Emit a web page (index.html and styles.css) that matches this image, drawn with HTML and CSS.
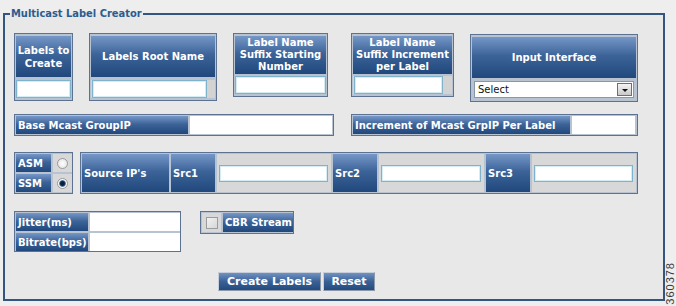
FILE: index.html
```html
<!DOCTYPE html>
<html lang="en">
<head>
  <meta charset="UTF-8" />
  <title>Multicast Label Creator</title>
  <link rel="stylesheet" href="styles.css">
</head>
<body>

  <!-- Multicast label creator form -->
  <fieldset class="creator">
    <legend>Multicast Label Creator</legend>

    <!-- Top row: label naming -->
    <div class="row row-top">
      <div class="box box-count">
        <div class="head">Labels to<br>Create</div>
        <input class="field" type="text">
      </div>
      <div class="box box-root">
        <div class="head">Labels Root Name</div>
        <div class="field-strip"><input class="field" type="text"></div>
      </div>
      <div class="box box-start">
        <div class="head three">Label Name<br>Suffix Starting<br>Number</div>
        <input class="field" type="text">
      </div>
      <div class="box box-inc">
        <div class="head three">Label Name<br>Suffix Increment<br>per Label</div>
        <div class="field-strip"><input class="field" type="text"></div>
      </div>
      <div class="box box-iface">
        <div class="head">Input Interface</div>
        <div class="select-wrap">
          <select class="select"><option>Select</option></select>
          <span class="select-arrow"></span>
        </div>
      </div>
    </div>

    <!-- Group IP row -->
    <div class="row row-ip">
      <div class="box inline ip-base">
        <div class="head left base-head">Base Mcast GroupIP</div>
        <input class="plain" type="text">
      </div>
      <div class="box inline ip-inc">
        <div class="head left inc-head">Increment of Mcast GrpIP Per Label</div>
        <input class="plain" type="text">
      </div>
    </div>

    <!-- Mode and sources -->
    <div class="row row-src">
      <div class="box grid mode">
        <div class="head left">ASM</div>
        <div class="cell"><input class="radio" type="radio" name="mode"></div>
        <div class="head left">SSM</div>
        <div class="cell"><input class="radio" type="radio" name="mode" checked></div>
      </div>
      <div class="box grid sources">
        <div class="head left">Source IP's</div>
        <div class="head left">Src1</div>
        <div class="cell pad"><input class="field" type="text"></div>
        <div class="head left">Src2</div>
        <div class="cell pad"><input class="field" type="text"></div>
        <div class="head left">Src3</div>
        <div class="cell pad"><input class="field" type="text"></div>
      </div>
    </div>

    <!-- Stream parameters -->
    <div class="row row-rate">
      <div class="box grid rate">
        <div class="head left">Jitter(ms)</div>
        <input class="plain" type="text">
        <div class="head left">Bitrate(bps)</div>
        <input class="plain" type="text">
      </div>
      <div class="box grid cbr">
        <div class="cell"><input class="check" type="checkbox"></div>
        <div class="head left">CBR Stream</div>
      </div>
    </div>

    <div class="actions">
      <button class="btn btn-create">Create Labels</button>
      <button class="btn btn-reset">Reset</button>
    </div>
  </fieldset>

  <span class="stamp">360378</span>

</body>
</html>
```

FILE: styles.css
```css
/* Page basics */
* {
  box-sizing: border-box;
}

body {
  margin: 0;
  width: 676px;
  height: 306px;
  position: relative;
  overflow: hidden;
  background-color: #eeeeee;
  font-family: "DejaVu Sans", Verdana, sans-serif;
  font-size: 10px;
}

/* Outer fieldset */
.creator {
  margin: 7px 0 0 3px;
  width: 662px;
  padding: 12px 9px 8px;
  border: 2px solid #34557f;
  background-color: #e8e8e8;
  min-width: 0;
}

.creator legend {
  margin-left: -4px;
  padding: 0 1px;
  color: #2d5c8e;
  font: bold 11px/14px "DejaVu Sans Condensed", "DejaVu Sans", sans-serif;
}

.row {
  display: flex;
  align-items: flex-start;
}

/* Blue framed boxes */
.box {
  display: flex;
  flex-direction: column;
  gap: 3px;
  padding: 2px 1px;
  border: 1px solid #5c7290;
  background-color: #b8c3d1;
}

.head {
  display: flex;
  align-items: center;
  justify-content: center;
  text-align: center;
  color: #ffffff;
  font-weight: bold;
  line-height: 13px;
  background: linear-gradient(#7597c7, #3d6499 45%, #21487c);
}

.head.three {
  line-height: 12px;
}

.head.left {
  justify-content: flex-start;
  text-align: left;
  padding-left: 2px;
}

.field {
  display: block;
  width: 100%;
  height: 18px;
  margin: 0;
  border: 1px solid #7fb3cb;
  box-shadow: inset 0 0 0 1px #d4ecf4;
  background-color: #ffffff;
}

.field-strip {
  display: flex;
  background-color: #d3d3d3;
}

.plain {
  display: block;
  margin: 0;
  border: 1px solid #ffffff;
  background-color: #ffffff;
}

/* Top row sizes */
.row-top {
  gap: 16px;
}

.box-count {
  width: 59px;
}

.box-count .head {
  height: 41px;
}

.box-root {
  width: 128px;
}

.box-root .head {
  height: 41px;
}

.box-root .field {
  width: 115px;
  margin-left: 1px;
}

.box-start,
.box-inc {
  gap: 2px;
}

.box-start {
  width: 95px;
}

.box-start .head,
.box-inc .head {
  height: 38px;
}

.box-inc {
  width: 103px;
  margin-left: 7px;
}

.box-inc .field {
  width: 89px;
  margin-left: 1px;
}

.box-iface {
  width: 168px;
  margin-top: 1px;
  padding-bottom: 3px;
}

.box-iface .head {
  height: 41px;
}

.select-wrap {
  position: relative;
  margin: 0 2px;
  height: 17px;
}

.select {
  appearance: none;
  width: 100%;
  height: 17px;
  margin: 0;
  padding: 0 3px;
  border: 1px solid #8797a8;
  background-color: #ffffff;
  color: #111111;
  font-family: "DejaVu Sans", Verdana, sans-serif;
  font-size: 10px;
}

.select-arrow {
  position: absolute;
  top: 2px;
  right: 2px;
  width: 15px;
  height: 13px;
  border: 1px solid #6f6f6f;
  background: linear-gradient(#f4f4f4, #c9c9c9);
}

.select-arrow::after {
  content: "";
  position: absolute;
  left: 4px;
  top: 5px;
  border-left: 3px solid transparent;
  border-right: 3px solid transparent;
  border-top: 3px solid #111111;
}

/* Inline boxes (label + input side by side) */
.box.inline {
  flex-direction: row;
  gap: 2px;
  padding: 1px;
  height: 22px;
}

.row-ip {
  margin-top: 12px;
  gap: 17px;
}

.ip-base {
  width: 320px;
}

.base-head {
  width: 172px;
}

.ip-base .plain {
  width: 142px;
}

.ip-inc {
  width: 287px;
  padding-left: 2px;
}

.inc-head {
  width: 217px;
}

.ip-inc .plain {
  width: 63px;
}

/* Grid boxes */
.box.grid {
  display: grid;
  gap: 2px;
  padding: 1px;
}

.cell {
  display: flex;
  align-items: center;
  justify-content: center;
  background-color: #d8d8d8;
}

.cell.pad {
  padding: 0 3px 0 2px;
}

.cell.pad .field {
  height: 17px;
}

.row-src {
  margin-top: 16px;
  gap: 7px;
}

.mode {
  width: 59px;
  height: 42px;
  grid-template-columns: 35px 19px;
  grid-template-rows: 18px 18px;
  column-gap: 1px;
}

.sources {
  width: 558px;
  height: 42px;
  padding: 2px;
  grid-template-columns: 87px 44px 114px 44px 105px 44px 1fr;
}

.radio {
  appearance: none;
  width: 11px;
  height: 11px;
  margin: 0;
  border: 1px solid #9a9a9a;
  border-radius: 50%;
  background: radial-gradient(#ffffff, #dedede);
}

.radio:checked {
  background: radial-gradient(#0c1f3a 30%, #3a6a9a 45%, #ffffff 60%, #dcdcdc);
}

.check {
  appearance: none;
  width: 12px;
  height: 12px;
  margin: 0;
  border: 1px solid #9c9c9c;
  background: linear-gradient(135deg, #f2f2f2, #d6d6d6);
}

.row-rate {
  margin-top: 17px;
  gap: 19px;
}

.rate {
  width: 167px;
  height: 41px;
  gap: 1px;
  grid-template-columns: 72px 90px;
  grid-template-rows: 18px 18px;
}

.cbr {
  width: 94px;
  height: 23px;
  gap: 1px;
  grid-template-columns: 19px 70px;
}

/* Buttons */
.actions {
  display: flex;
  gap: 2px;
  margin-top: 20px;
  padding-left: 204px;
}

.btn {
  height: 19px;
  padding: 0;
  border: 1px solid #c5ced9;
  border-bottom-color: #8d99a8;
  border-right-color: #8d99a8;
  color: #ffffff;
  font: bold 11px "DejaVu Sans", Verdana, sans-serif;
  background: linear-gradient(#7092c2, #3a6196 50%, #244b80);
}

.btn-create {
  width: 103px;
}

.btn-reset {
  width: 52px;
}

/* Figure number in the right margin */
.stamp {
  position: absolute;
  left: 665px;
  top: 262px;
  writing-mode: vertical-rl;
  transform: rotate(180deg);
  color: #3a3a3a;
  font: 11px/11px "Liberation Sans", Arial, sans-serif;
  letter-spacing: 1px;
}
```
